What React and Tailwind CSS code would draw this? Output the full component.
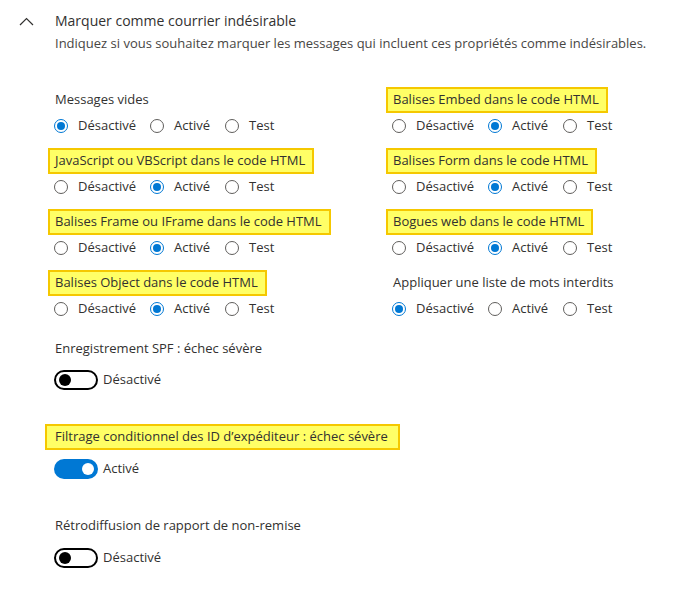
import React from "react";

const rowsLeft = [
  { label: "Messages vides", hl: false, value: 0 },
  { label: "JavaScript ou VBScript dans le code HTML", hl: true, value: 1 },
  { label: "Balises Frame ou IFrame dans le code HTML", hl: true, value: 1 },
  { label: "Balises Object dans le code HTML", hl: true, value: 1 },
];

const rowsRight = [
  { label: "Balises Embed dans le code HTML", hl: true, value: 1 },
  { label: "Balises Form dans le code HTML", hl: true, value: 1 },
  { label: "Bogues web dans le code HTML", hl: true, value: 1 },
  { label: "Appliquer une liste de mots interdits", hl: false, value: 0 },
];

const options = ["Désactivé", "Activé", "Test"];
const optionWidths = ["w-[96px]", "w-[75px]", "w-[70px]"];

const Label = ({ text, hl }) => {
  if (hl) {
    return (
      <span className="inline-flex items-center h-[26px] -ml-[7px] pl-[5px] pr-[7px] bg-[#ffff66] border-2 border-[#f5c800]">
        {text}
      </span>
    );
  }
  return <span className="inline-flex items-center h-[26px]">{text}</span>;
};

const Radio = ({ checked }) => (
  <span
    className={
      "flex items-center justify-center w-[14px] h-[14px] rounded-full border " +
      (checked ? "border-[#0078d4]" : "border-[#605e5c]")
    }
  >
    {checked && <span className="w-[8px] h-[8px] rounded-full bg-[#0078d4]" />}
  </span>
);

const Setting = ({ row }) => (
  <div className="flex flex-col items-start">
    <Label text={row.label} hl={row.hl} />
    <div className="flex items-center h-[22px] mt-[2px] -ml-[1px]">
      {options.map((o, i) => (
        <div key={o} className={"flex items-center " + optionWidths[i]}>
          <Radio checked={row.value === i} />
          <span className="ml-[10px]">{o}</span>
        </div>
      ))}
    </div>
  </div>
);

const Toggle = ({ on }) => {
  if (on) {
    return (
      <span className="flex items-center justify-end w-[44px] h-[20px] rounded-full bg-[#0078d4] pr-[4px]">
        <span className="w-[12px] h-[12px] rounded-full bg-white" />
      </span>
    );
  }
  return (
    <span className="flex items-center w-[44px] h-[20px] rounded-full border-2 border-black pl-[3px]">
      <span className="w-[12px] h-[12px] rounded-full bg-black" />
    </span>
  );
};

const ToggleRow = ({ on, text }) => (
  <div className="flex items-center h-[22px]">
    <Toggle on={on} />
    <span className="ml-[5px]">{text}</span>
  </div>
);

export default function App() {
  return (
    <div
      className="w-[677px] h-[594px] bg-white text-[#323130] text-[13px] overflow-hidden"
      style={{ fontFamily: "'Open Sans', 'Noto Sans', sans-serif" }}
    >
      <div className="flex pt-[10px]">
        <div className="w-[55px] flex justify-start pl-[19px] pt-[7px]">
          <svg width="15" height="9" viewBox="0 0 15 9" fill="none">
            <polyline points="1,8 7.5,1.5 14,8" stroke="#323130" strokeWidth="1.2" />
          </svg>
        </div>
        <div className="flex flex-col">
          <span className="text-[14px] leading-[22px]">Marquer comme courrier indésirable</span>
          <span className="text-[13px] leading-[22px] text-[#484644]">
            Indiquez si vous souhaitez marquer les messages qui incluent ces propriétés comme indésirables.
          </span>
        </div>
      </div>

      <div className="grid grid-cols-[338px_1fr] pl-[55px] mt-[33px]">
        <div className="flex flex-col gap-[11px]">
          {rowsLeft.map((r) => (
            <Setting key={r.label} row={r} />
          ))}
        </div>
        <div className="flex flex-col gap-[11px]">
          {rowsRight.map((r) => (
            <Setting key={r.label} row={r} />
          ))}
        </div>
      </div>

      <div className="pl-[55px] flex flex-col items-start mt-[16px]">
        <Label text="Enregistrement SPF : échec sévère" hl={false} />
        <div className="mt-[7px] -ml-[1px]">
          <ToggleRow on={false} text="Désactivé" />
        </div>
        <div className="mt-[33px]">
          <span className="inline-flex items-center h-[26px] -ml-[10px] pl-[8px] pr-[10px] bg-[#ffff66] border-2 border-[#f5c800]">
            Filtrage conditionnel des ID d’expéditeur : échec sévère
          </span>
        </div>
        <div className="mt-[8px] -ml-[1px]">
          <ToggleRow on={true} text="Activé" />
        </div>
        <div className="mt-[33px]">
          <Label text="Rétrodiffusion de rapport de non-remise" hl={false} />
        </div>
        <div className="mt-[8px] -ml-[1px]">
          <ToggleRow on={false} text="Désactivé" />
        </div>
      </div>
    </div>
  );
}
